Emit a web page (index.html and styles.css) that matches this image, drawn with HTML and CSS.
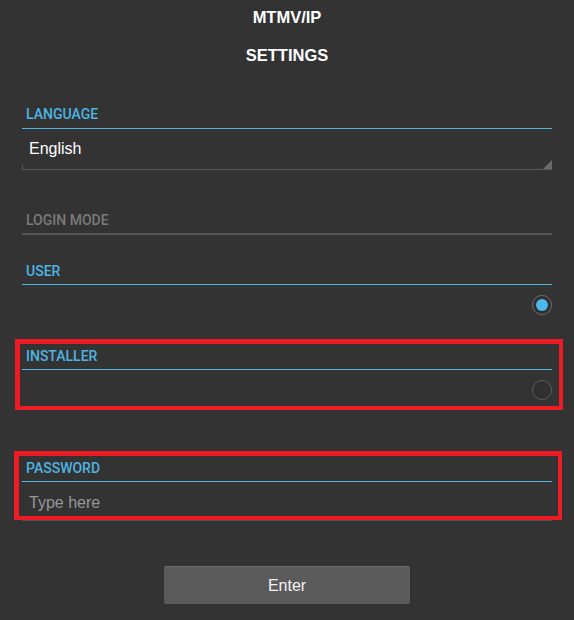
FILE: index.html
```html
<!DOCTYPE html>
<html lang="en">
<head>
<meta charset="utf-8">
<title>MTMV/IP Settings</title>
<link rel="stylesheet" href="styles.css">
</head>
<body>
<div class="page">
  <h1 class="title title-top">MTMV/IP</h1>
  <h2 class="title title-sub">SETTINGS</h2>

  <section class="field field-language">
    <div class="label label-active">LANGUAGE</div>
    <div class="select">English</div>
  </section>

  <section class="field field-mode">
    <div class="label label-muted">LOGIN MODE</div>
  </section>

  <section class="field field-user">
    <div class="label label-active">USER</div>
    <div class="radio-row"><span class="radio radio-on"></span></div>
  </section>

  <section class="mark mark-installer">
    <div class="label label-active">INSTALLER</div>
    <div class="radio-row"><span class="radio"></span></div>
  </section>

  <section class="mark mark-password">
    <div class="label label-active">PASSWORD</div>
    <div class="input">Type here</div>
  </section>
  <div class="underline"></div>

  <div class="actions">
    <button class="btn" type="button">Enter</button>
  </div>
</div>
</body>
</html>
```

FILE: styles.css
```css
html, body {
  margin: 0;
  padding: 0;
  background: #333333;
}

.page {
  width: 574px;
  height: 620px;
  box-sizing: border-box;
  padding: 0 22px;
  font-family: "Liberation Sans", Arial, sans-serif;
  color: #ffffff;
}

.title {
  margin: 0;
  text-align: center;
  font-size: 16.5px;
  font-weight: bold;
  line-height: 20px;
  color: #ffffff;
}

.title-top { padding-top: 7px; }
.title-sub { margin-top: 18px; }

.label {
  font-family: Roboto, "Noto Sans", sans-serif;
  font-size: 14px;
  font-weight: 500;
  line-height: 18px;
  padding: 2px 0 4px 4px;
}

.label-active {
  color: #4db4e3;
  border-bottom: 1px solid #4db4e3;
}

.label-muted {
  color: #7a7a7a;
  border-bottom: 2px solid #575757;
}

.field-language { margin-top: 38px; }
.field-language .label { padding-bottom: 5px; }

.select {
  position: relative;
  font-size: 16px;
  line-height: 20px;
  padding: 10px 0 10px 7px;
  color: #ffffff;
  border-bottom: 1px solid #595959;
}

.select::before {
  content: "";
  position: absolute;
  left: 0;
  bottom: 0;
  width: 1px;
  height: 4px;
  background: #595959;
}

.select::after {
  content: "";
  position: absolute;
  right: 0;
  bottom: 0;
  width: 9px;
  height: 9px;
  background: #6a6a6a;
  clip-path: polygon(100% 0, 100% 100%, 0 100%);
}

.field-mode { margin-top: 39px; }
.field-user { margin-top: 25px; }

.radio-row {
  display: flex;
  justify-content: flex-end;
  padding-top: 10px;
}

.radio {
  position: relative;
  width: 20px;
  height: 20px;
  box-sizing: border-box;
  border-radius: 50%;
  border: 1px solid #5c5c5c;
  background: #303030;
}

.radio-on {
  border-color: #666666;
  box-shadow: 0 0 1px #555555;
}

.radio-on::after {
  content: "";
  position: absolute;
  left: 3px;
  top: 3px;
  width: 12px;
  height: 12px;
  border-radius: 50%;
  background: #4db8ee;
}

.mark {
  border: solid #ed1c24;
  border-width: 5px 4px 4px 5px;
}

.mark-installer {
  margin: 24px -11px 0 -7px;
  padding: 1px 7px 6px 2px;
}

.mark-password {
  margin: 41px -10px 0 -8px;
  padding: 1px 6px 3px 3px;
}

.input {
  font-size: 16px;
  line-height: 20px;
  padding: 11px 0 0 7px;
  color: #979797;
}

.underline {
  height: 1px;
  background: #4f4f4f;
}

.actions {
  display: flex;
  justify-content: center;
  margin-top: 45px;
}

.btn {
  width: 246px;
  height: 38px;
  box-sizing: border-box;
  background: #5b5b5b;
  border: none;
  border-top: 1px solid #6b6b6b;
  border-radius: 2px;
  color: #f2f2f2;
  font-family: "Liberation Sans", Arial, sans-serif;
  font-size: 16px;
  padding: 0;
}
```
